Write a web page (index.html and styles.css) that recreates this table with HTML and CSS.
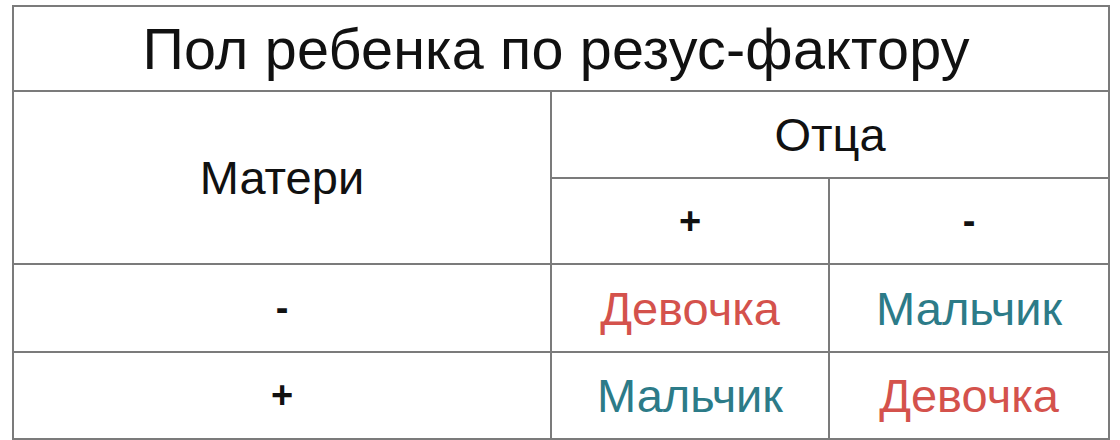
FILE: index.html
```html
<!DOCTYPE html>
<html lang="ru">
<head>
<meta charset="utf-8">
<title>Пол ребенка по резус-фактору</title>
<link rel="stylesheet" href="styles.css">
</head>
<body>
<table class="rh">
  <colgroup>
    <col class="c1">
    <col class="c2">
    <col class="c3">
  </colgroup>
  <tr class="r-title"><th colspan="3" class="title">Пол ребенка по резус-фактору</th></tr>
  <tr class="r2"><th rowspan="2" class="head">Матери</th><th colspan="2" class="head">Отца</th></tr>
  <tr class="r3"><td class="sign">+</td><td class="sign">-</td></tr>
  <tr class="r4"><td class="sign">-</td><td class="girl">Девочка</td><td class="boy">Мальчик</td></tr>
  <tr class="r5"><td class="sign">+</td><td class="boy">Мальчик</td><td class="girl">Девочка</td></tr>
</table>
</body>
</html>
```
FILE: styles.css
```css
html, body {
  margin: 0;
  padding: 0;
  background: #ffffff;
}
body {
  padding: 5px 0 0 12px;
  font-family: "Liberation Sans", Arial, sans-serif;
}
.rh {
  border-collapse: collapse;
  width: 1096px;
  table-layout: fixed;
}
.c1 { width: 538px; }
.c2 { width: 278px; }
.c3 { width: 280px; }
.rh th, .rh td {
  border: 2px solid #7b7b7b;
  padding: 0;
  text-align: center;
  vertical-align: middle;
  font-weight: normal;
  color: #111111;
}
.r-title { height: 85px; }
.r2 { height: 87px; }
.r3 { height: 86px; }
.r4 { height: 88px; }
.r5 { height: 87px; }
.rh .title {
  font-size: 57.5px;
  letter-spacing: 0.2px;
  padding-right: 10px;
}
.rh .head {
  font-size: 47px;
}
.rh .sign {
  font-size: 38px;
  font-weight: bold;
}
.rh .girl {
  font-size: 47px;
  color: #d4524c;
}
.rh .boy {
  font-size: 47px;
  color: #2c7b88;
}
```
